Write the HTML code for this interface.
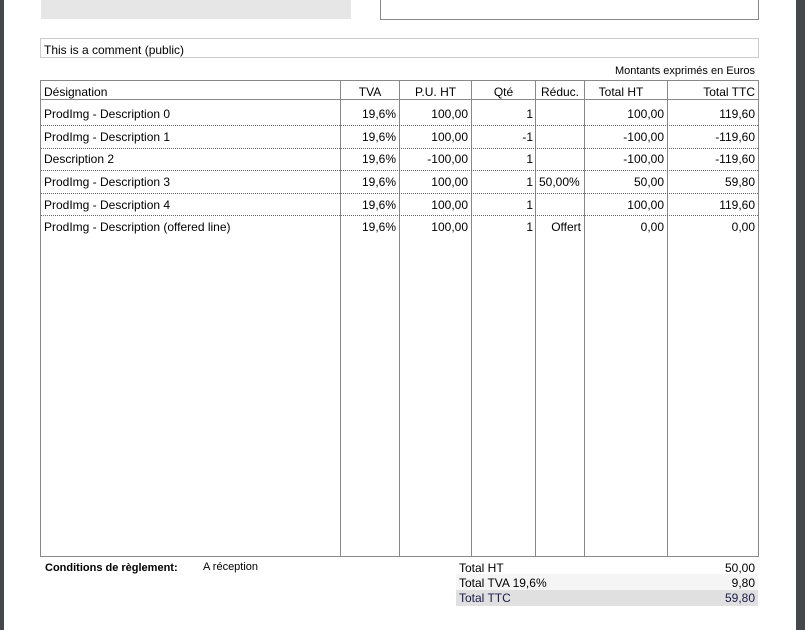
<!DOCTYPE html>
<html><head><meta charset="utf-8"><style>
body{margin:0;width:805px;height:630px;background:#fff;position:relative;overflow:hidden;font-family:"Liberation Sans",sans-serif;font-size:12px;color:#000}
.a{position:absolute}
.t{position:absolute;white-space:nowrap;line-height:14px}
.r{text-align:right}
.v{position:absolute;top:80px;height:476px;width:1px;background:#888}
.d{position:absolute;left:41px;width:717px;border-top:1px dotted #666;height:0}
</style></head><body>
<div class="a" style="left:0;top:0;width:4px;height:630px;background:#44484a"></div>
<div class="a" style="left:796px;top:0;width:9px;height:630px;background:#44484a"></div>
<div class="a" style="left:41px;top:0;width:310px;height:19px;background:#e6e6e6"></div>
<div class="a" style="left:380px;top:-1px;width:377px;height:19px;border:1px solid #888"></div>
<div class="a" style="left:40px;top:38px;width:717px;height:18px;border:1px solid #ccc"></div>
<div class="t" style="left:44px;top:43px">This is a comment (public)</div>
<div class="t r" style="right:50px;top:64px;font-size:11px">Montants exprimés en Euros</div>
<div class="a" style="left:40px;top:80px;width:717px;height:475px;border:1px solid #888"></div>
<div class="a" style="left:41px;top:99px;width:717px;height:1px;background:#888"></div>
<div class="v" style="left:340px"></div><div class="v" style="left:399px"></div><div class="v" style="left:471px"></div><div class="v" style="left:535px"></div><div class="v" style="left:584px"></div><div class="v" style="left:667px"></div>
<div class="d" style="top:125px"></div><div class="d" style="top:148px"></div><div class="d" style="top:170px"></div><div class="d" style="top:193px"></div><div class="d" style="top:215px"></div>
<div id="rows"></div>
<script>
var rows=[["Désignation","TVA","P.U. HT","Qté","Réduc.","Total HT","Total TTC"],
["ProdImg - Description 0","19,6%","100,00","1","","100,00","119,60"],
["ProdImg - Description 1","19,6%","100,00","-1","","-100,00","-119,60"],
["Description 2","19,6%","-100,00","1","","-100,00","-119,60"],
["ProdImg - Description 3","19,6%","100,00","1","50,00%","50,00","59,80"],
["ProdImg - Description 4","19,6%","100,00","1","","100,00","119,60"],
["ProdImg - Description (offered line)","19,6%","100,00","1","Offert","0,00","0,00"]];
var tops=[85,107,130,152,175,198,220];var h="";
rows.forEach(function(r,i){r.forEach(function(c,j){var s;
if(j==0)s="left:44px";
else if(j==1)s=i==0?"left:341px;width:58px;text-align:center":"right:"+(805-396)+"px";
else if(j==2)s=i==0?"left:400px;width:71px;text-align:center":"right:"+(805-468)+"px";
else if(j==3)s=i==0?"left:472px;width:63px;text-align:center":"right:"+(805-533)+"px";
else if(j==4)s=(i==4)?"left:539px":(i==6?"right:"+(805-581)+"px":"left:536px;width:48px;text-align:center");
else if(j==5)s=i==0?"left:585px;width:72px;text-align:center":"right:"+(805-664)+"px";
else s="right:"+(805-755)+"px";
h+='<div class="t" style="top:'+tops[i]+'px;'+s+'">'+c+'</div>';});});
document.getElementById('rows').innerHTML=h;
</script>
<div class="t" style="left:45px;top:561px;font-size:11px;font-weight:bold">Conditions de règlement:</div>
<div class="t" style="left:203px;top:560px;font-size:11px">A réception</div>
<div class="a" style="left:456px;top:574px;width:302px;height:16px;background:#f5f5f5"></div>
<div class="a" style="left:456px;top:590px;width:302px;height:16px;background:#e0e0e0"></div>
<div class="t" style="left:459px;top:561px">Total HT</div><div class="t" style="right:50px;top:561px">50,00</div>
<div class="t" style="left:459px;top:576px">Total TVA 19,6%</div><div class="t" style="right:50px;top:576px">9,80</div>
<div class="t" style="left:459px;top:591px;color:#1a1a4a">Total TTC</div><div class="t" style="right:50px;top:591px;color:#1a1a4a">59,80</div>
</body></html>
